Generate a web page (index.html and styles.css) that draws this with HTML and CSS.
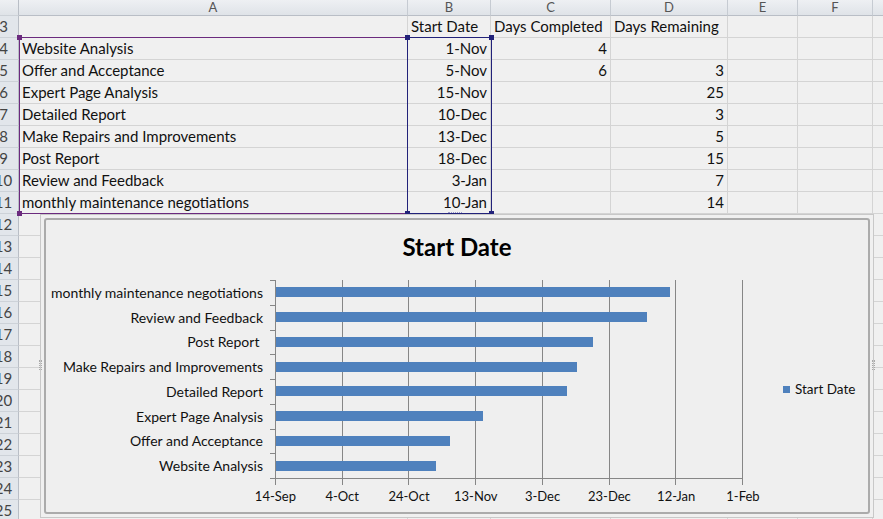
FILE: index.html
```html
<!DOCTYPE html>
<html lang="en">
<head>
    <meta charset="UTF-8">
    <title>Project schedule - Start Date</title>
    <link rel="stylesheet" href="styles.css">
</head>
<body>
    <div class="sheet">
        <div class="rh corner"></div>
        <div class="ch">A</div>
        <div class="ch">B</div>
        <div class="ch">C</div>
        <div class="ch">D</div>
        <div class="ch">E</div>
        <div class="ch">F</div>
        <div class="ch"></div>

        <div class="rh">3</div>
        <div class="c"></div>
        <div class="c">Start Date</div>
        <div class="c">Days Completed</div>
        <div class="c">Days Remaining</div>
        <div class="c"></div><div class="c"></div><div class="c"></div>

        <div class="rh">4</div>
        <div class="c">Website Analysis</div>
        <div class="c num">1-Nov</div>
        <div class="c num">4</div>
        <div class="c num"></div>
        <div class="c"></div><div class="c"></div><div class="c"></div>

        <div class="rh">5</div>
        <div class="c">Offer and Acceptance</div>
        <div class="c num">5-Nov</div>
        <div class="c num">6</div>
        <div class="c num">3</div>
        <div class="c"></div><div class="c"></div><div class="c"></div>

        <div class="rh">6</div>
        <div class="c">Expert Page Analysis</div>
        <div class="c num">15-Nov</div>
        <div class="c num"></div>
        <div class="c num">25</div>
        <div class="c"></div><div class="c"></div><div class="c"></div>

        <div class="rh">7</div>
        <div class="c">Detailed Report</div>
        <div class="c num">10-Dec</div>
        <div class="c num"></div>
        <div class="c num">3</div>
        <div class="c"></div><div class="c"></div><div class="c"></div>

        <div class="rh">8</div>
        <div class="c">Make Repairs and Improvements</div>
        <div class="c num">13-Dec</div>
        <div class="c num"></div>
        <div class="c num">5</div>
        <div class="c"></div><div class="c"></div><div class="c"></div>

        <div class="rh">9</div>
        <div class="c">Post Report</div>
        <div class="c num">18-Dec</div>
        <div class="c num"></div>
        <div class="c num">15</div>
        <div class="c"></div><div class="c"></div><div class="c"></div>

        <div class="rh">10</div>
        <div class="c">Review and Feedback</div>
        <div class="c num">3-Jan</div>
        <div class="c num"></div>
        <div class="c num">7</div>
        <div class="c"></div><div class="c"></div><div class="c"></div>

        <div class="rh">11</div>
        <div class="c">monthly maintenance negotiations</div>
        <div class="c num">10-Jan</div>
        <div class="c num"></div>
        <div class="c num">14</div>
        <div class="c"></div><div class="c"></div><div class="c"></div>

        <div class="rh">12</div><div class="c"></div><div class="c"></div><div class="c"></div><div class="c"></div><div class="c"></div><div class="c"></div><div class="c"></div>
        <div class="rh">13</div><div class="c"></div><div class="c"></div><div class="c"></div><div class="c"></div><div class="c"></div><div class="c"></div><div class="c"></div>
        <div class="rh">14</div><div class="c"></div><div class="c"></div><div class="c"></div><div class="c"></div><div class="c"></div><div class="c"></div><div class="c"></div>
        <div class="rh">15</div><div class="c"></div><div class="c"></div><div class="c"></div><div class="c"></div><div class="c"></div><div class="c"></div><div class="c"></div>
        <div class="rh">16</div><div class="c"></div><div class="c"></div><div class="c"></div><div class="c"></div><div class="c"></div><div class="c"></div><div class="c"></div>
        <div class="rh">17</div><div class="c"></div><div class="c"></div><div class="c"></div><div class="c"></div><div class="c"></div><div class="c"></div><div class="c"></div>
        <div class="rh">18</div><div class="c"></div><div class="c"></div><div class="c"></div><div class="c"></div><div class="c"></div><div class="c"></div><div class="c"></div>
        <div class="rh">19</div><div class="c"></div><div class="c"></div><div class="c"></div><div class="c"></div><div class="c"></div><div class="c"></div><div class="c"></div>
        <div class="rh">20</div><div class="c"></div><div class="c"></div><div class="c"></div><div class="c"></div><div class="c"></div><div class="c"></div><div class="c"></div>
        <div class="rh">21</div><div class="c"></div><div class="c"></div><div class="c"></div><div class="c"></div><div class="c"></div><div class="c"></div><div class="c"></div>
        <div class="rh">22</div><div class="c"></div><div class="c"></div><div class="c"></div><div class="c"></div><div class="c"></div><div class="c"></div><div class="c"></div>
        <div class="rh">23</div><div class="c"></div><div class="c"></div><div class="c"></div><div class="c"></div><div class="c"></div><div class="c"></div><div class="c"></div>
        <div class="rh">24</div><div class="c"></div><div class="c"></div><div class="c"></div><div class="c"></div><div class="c"></div><div class="c"></div><div class="c"></div>
        <div class="rh">25</div><div class="c"></div><div class="c"></div><div class="c"></div><div class="c"></div><div class="c"></div><div class="c"></div><div class="c"></div>
    </div>

    <!-- range finder boxes for the chart data -->
    <div class="range range-names">
        <span class="handle tl"></span>
        <span class="handle bl"></span>
    </div>
    <div class="range range-dates">
        <span class="handle tl"></span>
        <span class="handle tr"></span>
        <span class="handle bl"></span>
        <span class="handle br"></span>
        <span class="grip"></span>
    </div>

    <div class="chart-frame">
        <span class="side-grip left"></span>
        <span class="side-grip right"></span>
        <div class="chart">
            <div class="chart-title">Start Date</div>
            <div class="chart-body">
                <div class="cat-labels">
                    <div>monthly maintenance negotiations</div>
                    <div>Review and Feedback</div>
                    <div class="pre">Post Report </div>
                    <div>Make Repairs and Improvements</div>
                    <div>Detailed Report</div>
                    <div>Expert Page Analysis</div>
                    <div>Offer and Acceptance</div>
                    <div>Website Analysis</div>
                </div>
                <div class="yticks">
                    <span></span><span></span><span></span><span></span>
                    <span></span><span></span><span></span><span></span>
                </div>
                <div class="plot-col">
                    <div class="plot">
                        <div class="gridlines">
                            <span></span><span></span><span></span><span></span>
                            <span></span><span></span><span></span>
                        </div>
                        <div class="bars">
                            <div class="slot"><div class="bar" style="width: 394px"></div></div>
                            <div class="slot"><div class="bar" style="width: 371px"></div></div>
                            <div class="slot"><div class="bar" style="width: 317px"></div></div>
                            <div class="slot"><div class="bar" style="width: 301px"></div></div>
                            <div class="slot"><div class="bar" style="width: 291px"></div></div>
                            <div class="slot"><div class="bar" style="width: 207px"></div></div>
                            <div class="slot"><div class="bar" style="width: 174px"></div></div>
                            <div class="slot"><div class="bar" style="width: 160px"></div></div>
                        </div>
                    </div>
                    <div class="xticks">
                        <span></span><span></span><span></span><span></span>
                        <span></span><span></span><span></span>
                    </div>
                    <div class="xlabels">
                        <span>14-Sep</span><span>4-Oct</span><span>24-Oct</span><span>13-Nov</span>
                        <span>3-Dec</span><span>23-Dec</span><span>12-Jan</span><span>1-Feb</span>
                    </div>
                </div>
                <div class="legend">
                    <span class="swatch"></span>Start Date
                </div>
            </div>
        </div>
    </div>
</body>
</html>
```

FILE: styles.css
```css
* {
    box-sizing: border-box;
}
body {
    margin: 0;
    width: 883px;
    height: 519px;
    overflow: hidden;
    background-color: #f0f0f0;
    font-family: "Lato", "Open Sans", sans-serif;
    color: #111;
    position: relative;
}

/* worksheet grid */
.sheet {
    display: grid;
    grid-template-columns: 30px 389px 83px 120px 117px 70px 75px 40px;
    grid-template-rows: 16px;
    grid-auto-rows: 22px;
    margin-left: -11px;
    font-size: 15px;
}
.ch {
    height: 16px;
    line-height: 15px;
    text-align: center;
    color: #555;
    font-size: 13px;
    background: linear-gradient(#eef0f3, #dfe3e8);
    border-right: 1px solid #c6cbd2;
    border-bottom: 1px solid #b9bec6;
}
.rh {
    line-height: 21px;
    text-align: center;
    color: #444;
    background-color: #e2e6eb;
    border-right: 1px solid #b9bec6;
    border-bottom: 1px solid #cdd2d8;
}
.rh.corner {
    height: 16px;
    background: linear-gradient(#eef0f3, #dfe3e8);
}
.c {
    line-height: 21px;
    padding: 0 3px;
    white-space: nowrap;
    border-right: 1px solid #d4d4d4;
    border-bottom: 1px solid #d4d4d4;
}
.c.num {
    text-align: right;
}

/* range finder */
.range {
    position: absolute;
    top: 37px;
    height: 177px;
}
.range-names {
    left: 19px;
    width: 389px;
    border: 1px solid #6b2a7e;
}
.range-dates {
    left: 407px;
    width: 85px;
    border: 1px solid #22227a;
}
.handle {
    position: absolute;
    width: 5px;
    height: 5px;
    background-color: #22227a;
}
.range-names .handle {
    background-color: #6b2a7e;
}
.handle.tl { left: -3px; top: -3px; }
.handle.tr { right: -3px; top: -3px; }
.handle.bl { left: -3px; bottom: -3px; }
.handle.br { right: -3px; bottom: -3px; }
.grip {
    position: absolute;
    left: 40px;
    bottom: -2px;
    width: 14px;
    height: 3px;
    border-top: 1px dotted #9a9ac8;
    border-bottom: 1px dotted #9a9ac8;
}

/* chart object */
.chart-frame {
    position: absolute;
    left: 40px;
    top: 214px;
    padding: 3px;
    border: 1px solid #c8c8c8;
    background-color: #f0f0f0;
}
.side-grip {
    position: absolute;
    top: 145px;
    width: 3px;
    height: 10px;
    border-left: 1px dotted #aaa;
    border-right: 1px dotted #aaa;
}
.side-grip.left { left: -2px; }
.side-grip.right { right: -2px; }
.chart {
    width: 826px;
    height: 296px;
    border: 2px solid #ababab;
    border-radius: 3px;
    background-color: #efefef;
}
.chart-title {
    padding-top: 13px;
    height: 40px;
    line-height: 28px;
    text-align: center;
    font-size: 24px;
    font-weight: bold;
    color: #000;
}
.chart-body {
    display: flex;
    margin-top: 20px;
    font-size: 14px;
    color: #111;
}
.chart-body > div {
    flex-shrink: 0;
}
.cat-labels {
    width: 217px;
    height: 198px;
    display: grid;
    grid-template-rows: repeat(8, 1fr);
}
.cat-labels div {
    display: flex;
    align-items: center;
    justify-content: flex-end;
    white-space: nowrap;
}
.cat-labels .pre {
    white-space: pre;
}
.yticks {
    width: 5px;
    height: 199px;
    margin-left: 7px;
    display: flex;
    flex-direction: column;
    border-bottom: 1px solid #868686;
}
.yticks span {
    flex: 1;
    border-top: 1px solid #868686;
}
.plot-col {
    width: 468px;
    display: flex;
    flex-direction: column;
}
.plot {
    width: 468px;
    height: 199px;
    border-left: 1px solid #868686;
    border-bottom: 1px solid #868686;
    display: grid;
}
.gridlines, .bars {
    grid-area: 1 / 1;
}
.gridlines {
    display: flex;
}
.gridlines span {
    flex: 1;
    border-right: 1px solid #868686;
}
.bars {
    display: grid;
    grid-template-rows: repeat(8, 1fr);
}
.slot {
    display: flex;
    align-items: center;
}
.bar {
    height: 10px;
    background-color: #4f81bd;
}
.xticks {
    width: 468px;
    height: 6px;
    display: flex;
    border-left: 1px solid #868686;
}
.xticks span {
    flex: 1;
    border-right: 1px solid #868686;
}
.xlabels {
    width: 535px;
    display: grid;
    grid-template-columns: repeat(8, 66.8px);
    margin-left: -33px;
    margin-top: 3px;
    line-height: 16px;
    font-size: 13px;
}
.xlabels span {
    text-align: center;
}
.legend {
    margin-left: 40px;
    margin-top: 101px;
    height: 16px;
    line-height: 16px;
    font-size: 13.5px;
    display: flex;
    align-items: center;
    white-space: nowrap;
}
.swatch {
    width: 7px;
    height: 7px;
    margin-right: 5px;
    background-color: #4f81bd;
}
```
